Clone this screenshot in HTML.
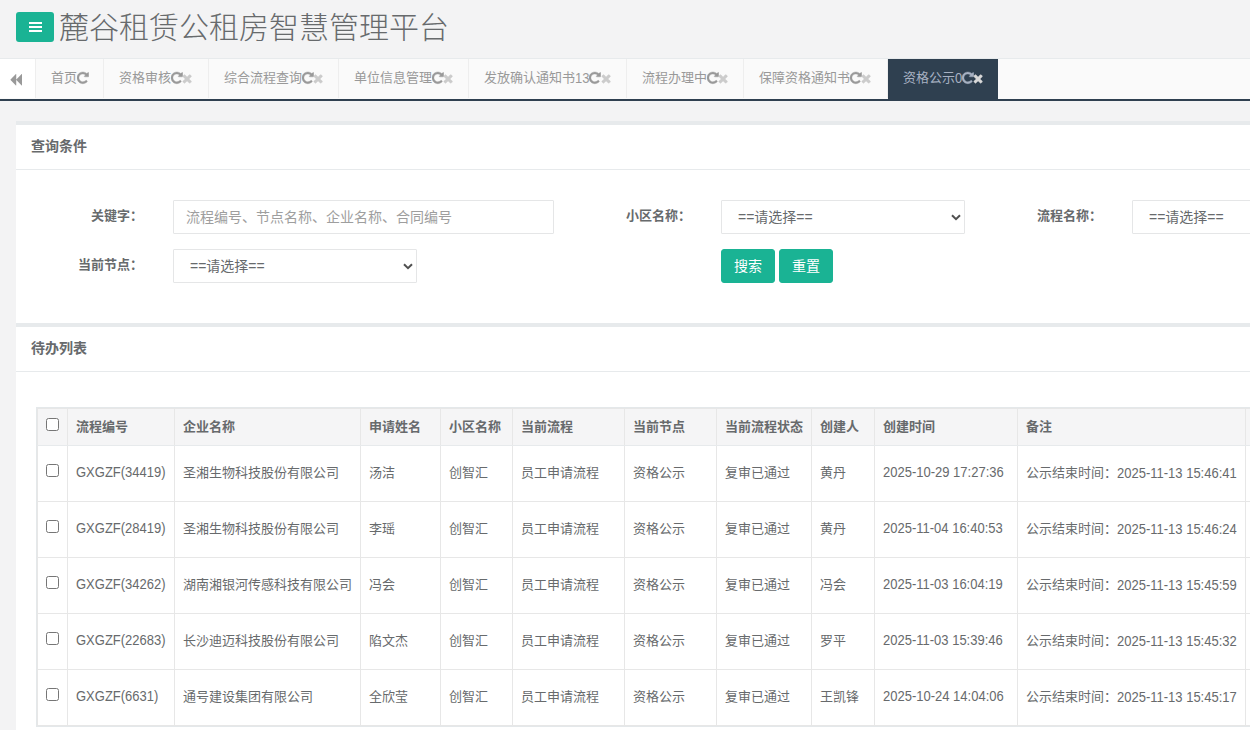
<!DOCTYPE html>
<html lang="zh-CN">
<head>
<meta charset="utf-8">
<title>麓谷租赁公租房智慧管理平台</title>
<style>
*{box-sizing:border-box;margin:0;padding:0}
html,body{width:1250px;height:730px;overflow:hidden}
body{background:#f3f3f4;color:#676a6c;font-family:"Liberation Sans","Noto Sans CJK SC",sans-serif;font-size:13px;position:relative}
.abs{position:absolute}
/* header */
#menu-btn{left:16px;top:12px;width:38px;height:30px;background:#1ab394;border-radius:3px}
#menu-btn i{position:absolute;left:12.6px;width:13px;height:2px;background:#fff}
#title{left:59px;top:6px;height:44px;line-height:44px;font-size:30px;font-weight:300;color:#676a6c;white-space:nowrap;letter-spacing:0}
/* tabs */
#tabs{left:0;top:58px;width:1250px;height:43px;background:#fafafa;border-top:1px solid #e7eaec;border-bottom:2px solid #2f4050}
#roll{left:0;top:0;width:36px;height:39px;background:#fff;border-right:1px solid #eee}
.tab{position:absolute;top:0;height:39px;line-height:38px;border-right:1px solid #eee;padding:0 15px;color:#999;font-size:13px;white-space:nowrap}
.tab .d{position:relative;top:2px;display:inline-block;transform:scaleY(1.08);transform-origin:0 78%}
.tab.active{height:40px;background:#2f4050;color:#a7b1c2;border-right:none}
.tab svg{display:inline-block;vertical-align:-2.5px;height:13px;stroke-width:50px}
.ico-r{width:11.7px;height:13.65px !important;margin-right:-0.56px;fill:#999;stroke:#999}
.ico-x{width:10.21px;fill:#ccc;stroke:#ccc}
.tab.active .ico-r{fill:#a7b1c2;stroke:#a7b1c2}
.tab.active .ico-x{fill:#d8d8d8;stroke:#d8d8d8}
/* ibox */
.ibox-bar{left:16px;width:1234px;height:4px;background:#e7eaec}
.ibox-white{left:16px;width:1234px;background:#fff}
.h5{left:31px;font-size:14px;font-weight:700;color:#676a6c;line-height:20px;height:20px;white-space:nowrap}
.hr{left:16px;width:1234px;height:1px;background:#e7eaec}
.lbl{font-weight:700;font-size:13px;line-height:20px;height:20px;white-space:nowrap;text-align:right}
.fc{height:34px;border:1px solid #e5e6e7;border-radius:1px;background:#fff;font-size:14px;line-height:32px;white-space:nowrap;overflow:hidden}
.fc.ph{padding-left:12px;color:#9e9e9e}
.fc.sel{padding-left:16px;color:#676a6c}
.chev{position:absolute;right:3px;top:13px;width:10px;height:7px}
.btn{height:34px;width:54px;background:#1ab394;border:1px solid #1ab394;border-radius:3px;color:#fff;font-size:14px;line-height:32px;text-align:center}
/* table */
#tbl{left:37px;top:408px;border-collapse:collapse;table-layout:fixed;font-size:13px;color:#676a6c;width:1328px}
#tbl th,#tbl td{border:1px solid #e7e7e7;padding:0 8px;text-align:left;vertical-align:middle;white-space:nowrap;overflow:hidden}
#tbl th{height:37px;background:#f5f5f6;font-weight:700;border-bottom:1px solid #e7eaec}
#tbl td{height:56px;background:#fff}
#tbl .c{position:relative;top:-2px}
#tbl .l{position:relative;top:-1px;display:inline-block;transform:scaleY(1.08);transform-origin:0 78%}
.cb{display:block;width:13px;height:13px;border:1px solid #767676;border-radius:2.5px;background:#fff;position:relative;top:-3px;left:0}
</style>
</head>
<body>
<!-- header -->
<div id="menu-btn" class="abs"><i style="top:10px"></i><i style="top:14px"></i><i style="top:18px"></i></div>
<div id="title" class="abs">麓谷租赁公租房智慧管理平台</div>

<!-- tabs -->
<div id="tabs" class="abs">
  <div id="roll" class="abs"><svg class="abs" style="left:8.8px;top:13.9px" width="13.5" height="13.5" viewBox="0 0 1792 1792"><path fill="#999" d="M1683 141q19-19 32-13t13 32v1472q0 26-13 32t-32-13l-710-710q-9-9-13-19v710q0 26-13 32t-32-13l-710-710q-19-19-19-45t19-45l710-710q19-19 32-13t13 32v710q4-10 13-19z"/></svg></div>
  <div class="tab" style="left:36px;width:68px">首页<svg class="ico-r" viewBox="128 0 1536 1792"><use href="#p-rep"/></svg></div>
  <div class="tab" style="left:104px;width:105px">资格审核<svg class="ico-r" viewBox="128 0 1536 1792"><use href="#p-rep"/></svg><svg class="ico-x" viewBox="192 0 1408 1792"><use href="#p-x"/></svg></div>
  <div class="tab" style="left:209px;width:130px">综合流程查询<svg class="ico-r" viewBox="128 0 1536 1792"><use href="#p-rep"/></svg><svg class="ico-x" viewBox="192 0 1408 1792"><use href="#p-x"/></svg></div>
  <div class="tab" style="left:339px;width:130px">单位信息管理<svg class="ico-r" viewBox="128 0 1536 1792"><use href="#p-rep"/></svg><svg class="ico-x" viewBox="192 0 1408 1792"><use href="#p-x"/></svg></div>
  <div class="tab" style="left:469px;width:158px">发放确认通知书<span class="d">13</span><svg class="ico-r" viewBox="128 0 1536 1792"><use href="#p-rep"/></svg><svg class="ico-x" viewBox="192 0 1408 1792"><use href="#p-x"/></svg></div>
  <div class="tab" style="left:627px;width:117px">流程办理中<svg class="ico-r" viewBox="128 0 1536 1792"><use href="#p-rep"/></svg><svg class="ico-x" viewBox="192 0 1408 1792"><use href="#p-x"/></svg></div>
  <div class="tab" style="left:744px;width:144px">保障资格通知书<svg class="ico-r" viewBox="128 0 1536 1792"><use href="#p-rep"/></svg><svg class="ico-x" viewBox="192 0 1408 1792"><use href="#p-x"/></svg></div>
  <div class="tab active" style="left:888px;width:110px">资格公示<span class="d">0</span><svg class="ico-r" viewBox="128 0 1536 1792"><use href="#p-rep"/></svg><svg class="ico-x" viewBox="192 0 1408 1792"><use href="#p-x"/></svg></div>
</div>

<svg width="0" height="0" style="position:absolute">
  <defs>
    <path id="p-rep" d="M1664 256v448q0 26-19 45t-45 19h-448q-42 0-59-40-17-39 14-69l138-138q-148-137-349-137-104 0-198.500 40.500t-163.500 109.500-109.500 163.500-40.500 198.500 40.500 198.500 109.500 163.500 163.500 109.500 198.500 40.500q119 0 225-52t179-147q7-10 23-12 15 0 25 9l137 138q9 8 9.500 20.500t-7.500 22.500q-109 132-264 204.500t-327 72.500q-156 0-298-61t-245-164-164-245-61-298 61-298 164-245 245-164 298-61q147 0 284.500 55.500t244.500 156.500l130-129q29-31 70-14 39 17 39 59z"/>
    <path id="p-x" d="M1490 1322q0 40-28 68l-136 136q-28 28-68 28t-68-28l-294-294-294 294q-28 28-68 28t-68-28l-136-136q-28-28-28-68t28-68l294-294-294-294q-28-28-28-68t28-68l136-136q28-28 68-28t68 28l294 294 294-294q28-28 68-28t68 28l136 136q28 28 28 68t-28 68l-294 294 294 294q28 28 28 68z"/>
  </defs>
</svg>

<!-- ibox 1 -->
<div class="abs ibox-bar" style="top:121px"></div>
<div class="abs ibox-white" style="top:125px;height:198px"></div>
<div class="abs h5" style="top:136px">查询条件</div>
<div class="abs hr" style="top:169px"></div>

<div class="abs lbl" style="left:43px;width:100px;top:206px">关键字：</div>
<div class="abs fc ph" style="left:173px;top:200px;width:381px">流程编号、节点名称、企业名称、合同编号</div>
<div class="abs lbl" style="left:591px;width:100px;top:206px">小区名称：</div>
<div class="abs fc sel" style="left:721px;top:200px;width:244px">==请选择==<svg class="chev" viewBox="0 0 10 7"><path d="M1 1.2 L5 5.2 L9 1.2" fill="none" stroke="#505050" stroke-width="2"/></svg></div>
<div class="abs lbl" style="left:1002px;width:100px;top:206px">流程名称：</div>
<div class="abs fc sel" style="left:1132px;top:200px;width:244px">==请选择==</div>

<div class="abs lbl" style="left:43px;width:100px;top:255px">当前节点：</div>
<div class="abs fc sel" style="left:173px;top:249px;width:244px">==请选择==<svg class="chev" viewBox="0 0 10 7"><path d="M1 1.2 L5 5.2 L9 1.2" fill="none" stroke="#505050" stroke-width="2"/></svg></div>
<div class="abs btn" style="left:721px;top:249px">搜索</div>
<div class="abs btn" style="left:779px;top:249px">重置</div>

<!-- ibox 2 -->
<div class="abs ibox-bar" style="top:323px"></div>
<div class="abs ibox-white" style="top:327px;height:403px"></div>
<div class="abs h5" style="top:338px">待办列表</div>
<div class="abs hr" style="top:371px"></div>

<div class="abs" style="left:36px;top:407px;width:1214px;height:1px;background:#e4e8ea"></div>
<div class="abs" style="left:36px;top:407px;width:1px;height:320px;background:#e4e8ea"></div>
<div class="abs" style="left:36px;top:726px;width:1214px;height:1px;background:#e4e8ea"></div>
<table id="tbl" class="abs">
<colgroup><col style="width:30px"><col style="width:107px"><col style="width:186px"><col style="width:80px"><col style="width:72px"><col style="width:112px"><col style="width:92px"><col style="width:95px"><col style="width:63px"><col style="width:143px"><col style="width:228px"><col style="width:120px"></colgroup>
<thead><tr><th><span class="cb"></span></th><th><span class="c">流程编号</span></th><th><span class="c">企业名称</span></th><th><span class="c">申请姓名</span></th><th><span class="c">小区名称</span></th><th><span class="c">当前流程</span></th><th><span class="c">当前节点</span></th><th><span class="c">当前流程状态</span></th><th><span class="c">创建人</span></th><th><span class="c">创建时间</span></th><th><span class="c">备注</span></th><th></th></tr></thead>
<tbody>
<tr><td><span class="cb"></span></td><td><span class="l">GXGZF(34419)</span></td><td><span class="c">圣湘生物科技股份有限公司</span></td><td><span class="c">汤洁</span></td><td><span class="c">创智汇</span></td><td><span class="c">员工申请流程</span></td><td><span class="c">资格公示</span></td><td><span class="c">复审已通过</span></td><td><span class="c">黄丹</span></td><td><span class="l">2025-10-29 17:27:36</span></td><td><span class="c">公示结束时间：</span><span class="l">2025-11-13 15:46:41</span></td><td></td></tr>
<tr><td><span class="cb"></span></td><td><span class="l">GXGZF(28419)</span></td><td><span class="c">圣湘生物科技股份有限公司</span></td><td><span class="c">李瑶</span></td><td><span class="c">创智汇</span></td><td><span class="c">员工申请流程</span></td><td><span class="c">资格公示</span></td><td><span class="c">复审已通过</span></td><td><span class="c">黄丹</span></td><td><span class="l">2025-11-04 16:40:53</span></td><td><span class="c">公示结束时间：</span><span class="l">2025-11-13 15:46:24</span></td><td></td></tr>
<tr><td><span class="cb"></span></td><td><span class="l">GXGZF(34262)</span></td><td><span class="c">湖南湘银河传感科技有限公司</span></td><td><span class="c">冯会</span></td><td><span class="c">创智汇</span></td><td><span class="c">员工申请流程</span></td><td><span class="c">资格公示</span></td><td><span class="c">复审已通过</span></td><td><span class="c">冯会</span></td><td><span class="l">2025-11-03 16:04:19</span></td><td><span class="c">公示结束时间：</span><span class="l">2025-11-13 15:45:59</span></td><td></td></tr>
<tr><td><span class="cb"></span></td><td><span class="l">GXGZF(22683)</span></td><td><span class="c">长沙迪迈科技股份有限公司</span></td><td><span class="c">陷文杰</span></td><td><span class="c">创智汇</span></td><td><span class="c">员工申请流程</span></td><td><span class="c">资格公示</span></td><td><span class="c">复审已通过</span></td><td><span class="c">罗平</span></td><td><span class="l">2025-11-03 15:39:46</span></td><td><span class="c">公示结束时间：</span><span class="l">2025-11-13 15:45:32</span></td><td></td></tr>
<tr><td><span class="cb"></span></td><td><span class="l">GXGZF(6631)</span></td><td><span class="c">通号建设集团有限公司</span></td><td><span class="c">全欣莹</span></td><td><span class="c">创智汇</span></td><td><span class="c">员工申请流程</span></td><td><span class="c">资格公示</span></td><td><span class="c">复审已通过</span></td><td><span class="c">王凯锋</span></td><td><span class="l">2025-10-24 14:04:06</span></td><td><span class="c">公示结束时间：</span><span class="l">2025-11-13 15:45:17</span></td><td></td></tr>
</tbody>
</table>
</body>
</html>
